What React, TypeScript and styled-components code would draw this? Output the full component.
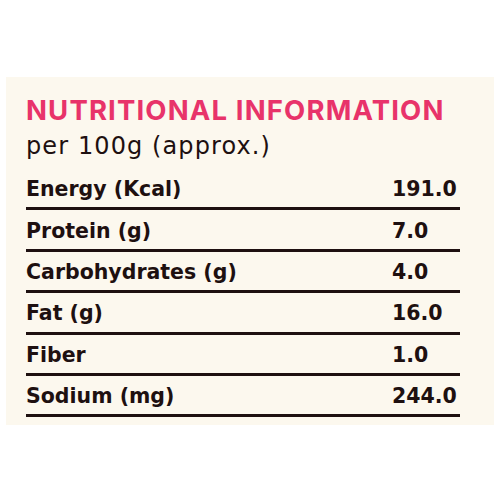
import React from 'react'
import styled, { createGlobalStyle } from 'styled-components'

const GlobalStyle = createGlobalStyle`
  body {
    margin: 0;
    background: #ffffff;
    font-family: 'DejaVu Sans', Inter, sans-serif;
  }
`

const Page = styled.div`
  width: 500px;
  height: 500px;
  padding-top: 77px;
  box-sizing: border-box;
`

const Panel = styled.div`
  margin-left: 6px;
  width: 488px;
  height: 348px;
  box-sizing: border-box;
  background: #fcf8ee;
  padding: 16px 34px 0 20px;
`

const Title = styled.h1`
  margin: 0;
  font-family: Inter, 'DejaVu Sans', sans-serif;
  font-size: 27.5px;
  font-weight: 700;
  line-height: 34px;
  letter-spacing: 1.15px;
  white-space: nowrap;
  color: #e8336a;
`

const Subtitle = styled.div`
  margin-top: 5px;
  font-size: 24px;
  font-weight: 400;
  line-height: 28px;
  letter-spacing: 1.1px;
  color: #1e1010;
`

const Table = styled.div`
  margin-top: 9px;
`

const Row = styled.div`
  display: grid;
  grid-template-columns: 366px 1fr;
  height: 41.4px;
  box-sizing: border-box;
  border-bottom: 3px solid #1e1010;
  align-items: center;
  font-size: 20.5px;
  font-weight: 700;
  color: #1e1010;
`

const Cell = styled.span`
  padding-top: 2px;
`

const rows = [
  ['Energy (Kcal)', '191.0'],
  ['Protein (g)', '7.0'],
  ['Carbohydrates (g)', '4.0'],
  ['Fat (g)', '16.0'],
  ['Fiber', '1.0'],
  ['Sodium (mg)', '244.0'],
]

const App = () => (
  <Page>
    <GlobalStyle />
    <Panel>
      <Title>NUTRITIONAL INFORMATION</Title>
      <Subtitle>per 100g (approx.)</Subtitle>
      <Table>
        {rows.map(([label, value]) => (
          <Row key={label}>
            <Cell>{label}</Cell>
            <Cell>{value}</Cell>
          </Row>
        ))}
      </Table>
    </Panel>
  </Page>
)

export default App
